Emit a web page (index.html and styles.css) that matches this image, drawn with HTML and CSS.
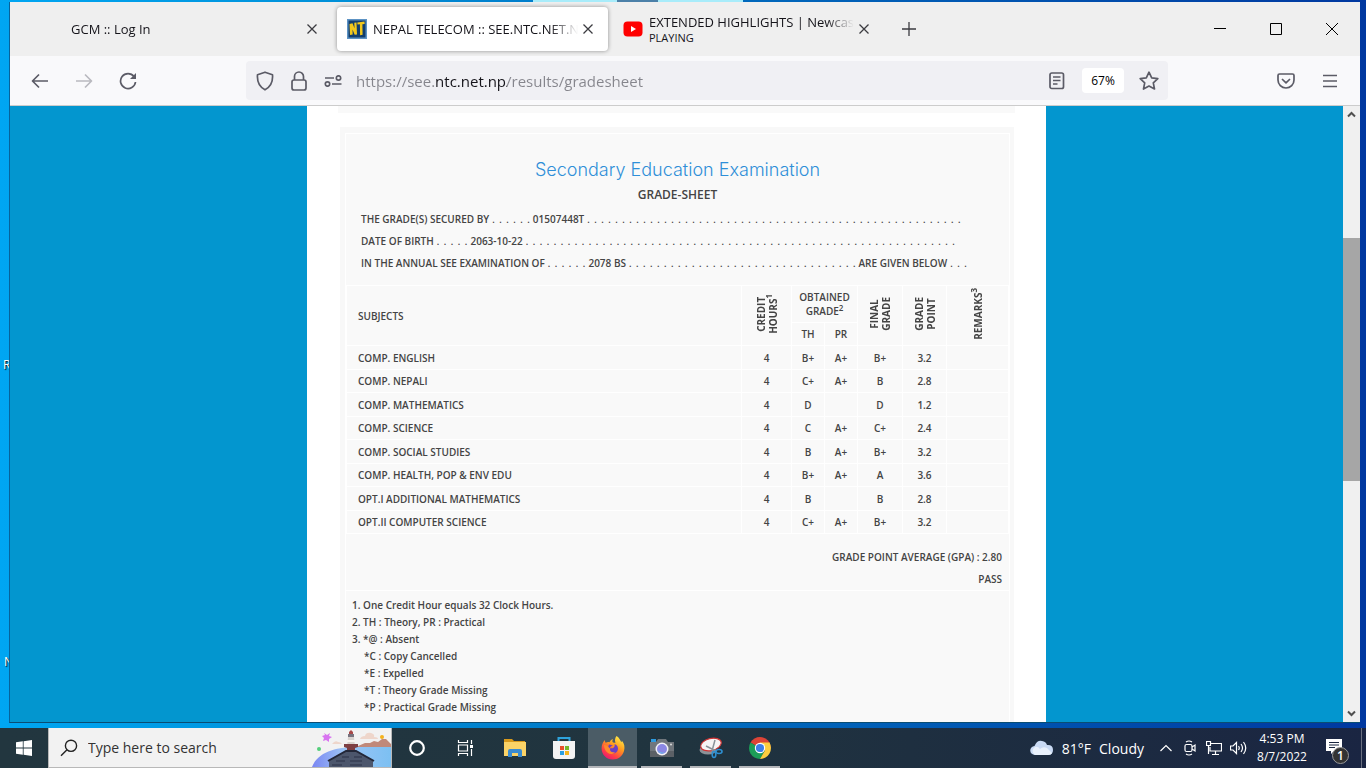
FILE: index.html
```html
<!DOCTYPE html>
<html lang="en">
<head>
	<meta charset="UTF-8">
	<title>NEPAL TELECOM :: SEE.NTC.NET.NP</title>
	<link rel="stylesheet" href="styles.css">
</head>
<body>
	<div class="desktop">
		<div class="peek"></div>
		<span class="shortcut recycle">R</span>
		<span class="shortcut nox">N</span>
		<div class="window">
			<div class="tabbar">
				<div class="tab">
					<button class="tab-title"><span class="fade">GCM :: Log In</span></button>
					<button class="close" aria-label="Close tab"><svg width="12" height="12" viewBox="0 0 12 12"><path d="M1.5 1.5l9 9M10.5 1.5l-9 9"/></svg></button>
				</div>
				<div class="tab active">
					<svg class="favicon" width="20" height="20" viewBox="0 0 20 20"><rect width="20" height="20" fill="#5d93c4"/><rect x="1.5" y="1.5" width="17" height="17" fill="#123e6e"/><path d="M3 16L2.500 5 5.500 4.200l2 5-.2-5.400 2.200-.4.500 12-2.300.4-2.200-5.300.2 5zM10.500 5.600l-.2-2.200 7.200-.8.200 2.300-2.300.3.2 10.600-2.500.4-.2-10.900z" fill="#f2c81c"/></svg>
					<button class="tab-title"><span class="fade">NEPAL TELECOM :: SEE.NTC.NET.N</span></button>
					<button class="close" aria-label="Close tab"><svg width="12" height="12" viewBox="0 0 12 12"><path d="M1.5 1.5l9 9M10.5 1.5l-9 9"/></svg></button>
				</div>
				<div class="tab">
					<svg class="favicon" width="20" height="16" viewBox="0 0 20 16"><rect x=".5" y=".5" width="19" height="15" rx="4" fill="#f00"/><path d="M8 5l5 3-5 3z" fill="#fff"/></svg>
					<button class="tab-title playing"><span class="fade">EXTENDED HIGHLIGHTS | Newcas</span><small>PLAYING</small></button>
					<button class="close" aria-label="Close tab"><svg width="12" height="12" viewBox="0 0 12 12"><path d="M1.5 1.5l9 9M10.5 1.5l-9 9"/></svg></button>
				</div>
				<button class="newtab" aria-label="New tab"><svg width="16" height="16" viewBox="0 0 16 16"><path d="M8 1v14M1 8h14"/></svg></button>
				<div class="controls">
					<button aria-label="Minimize"><svg width="12" height="12" viewBox="0 0 12 12"><path d="M0 5.5h12"/></svg></button>
					<button aria-label="Maximize"><svg width="12" height="12" viewBox="0 0 12 12"><path d="M.5.5h11v11H.5z"/></svg></button>
					<button aria-label="Close"><svg width="12" height="12" viewBox="0 0 12 12"><path d="M0 0l12 12M12 0L0 12"/></svg></button>
				</div>
			</div>
			<div class="toolbar">
				<button class="tool" aria-label="Back"><svg width="18" height="16" viewBox="0 0 18 16"><path d="M17 8H1.5M8 1.5L1.5 8 8 14.5"/></svg></button>
				<button class="tool" aria-label="Forward" disabled><svg width="18" height="16" viewBox="0 0 18 16"><path d="M1 8h15.5M10 1.5L16.5 8 10 14.5"/></svg></button>
				<button class="tool" aria-label="Reload"><svg width="18" height="18" viewBox="0 0 18 18"><path d="M15 4.500A7.500 7.500 0 1 0 16.500 10"/><path d="M17 1v6h-6z" fill="#5b5b66" stroke="none"/></svg></button>
				<div class="urlbar">
					<button class="icon" aria-label="Tracking protection"><svg width="18" height="20" viewBox="0 0 18 20"><path d="M9 1.200l7.500 2.600c.6 7.200-1.800 12-7.500 15C3.300 15.800.9 11 1.500 3.800z"/></svg></button>
					<button class="icon" aria-label="Connection"><svg width="16" height="20" viewBox="0 0 16 20"><rect x="1" y="9" width="14" height="10" rx="2"/><path d="M3.500 9V5.500a4.500 4.500 0 0 1 9 0V9"/></svg></button>
					<button class="icon" aria-label="Permissions"><svg width="18" height="12" viewBox="0 0 18 12"><circle cx="14.500" cy="3" r="2.200"/><circle cx="3.500" cy="9" r="2.200"/><path d="M1 3h9M8 9h9.500"/></svg></button>
					<input class="url" type="text" aria-label="Address" value="https://see.ntc.net.np/results/gradesheet">
					<button class="icon" aria-label="Reader view"><svg width="16" height="18" viewBox="0 0 16 18"><rect x="1" y="1" width="13.500" height="15.500" rx="1.800"/><path d="M4 5h7.500M4 8.500h7.500M4 12h4.500"/></svg></button>
					<button class="zoom">67%</button>
					<button class="icon" aria-label="Bookmark"><svg width="20" height="20" viewBox="0 0 20 20"><path d="M10 1.200l2.700 5.600 6.100.8-4.500 4.200 1.200 6.200L10 15.100l-5.500 2.900 1.200-6.200L1.200 7.600l6.100-.8z"/></svg></button>
				</div>
				<button class="tool" aria-label="Pocket"><svg width="18" height="16" viewBox="0 0 18 16"><path d="M2.500 1h13c.8 0 1.500.7 1.500 1.500V7c0 4.500-3.500 8-8 8s-8-3.500-8-8V2.500C1 1.700 1.700 1 2.500 1zM5 6l4 3.800L13 6"/></svg></button>
				<button class="tool" aria-label="Menu"><svg width="16" height="14" viewBox="0 0 16 14"><path d="M1 1.500h14M1 7h14M1 12.500h14"/></svg></button>
			</div>
			<div class="view">
				<div class="page">
					<div class="main">
						<div class="strip"></div>
						<div class="panel">
							<div class="sheet">
								<div class="head">
									<h1>Secondary Education Examination</h1>
									<h2>GRADE-SHEET</h2>
									<p>THE GRADE(S) SECURED BY <span class="dots">. . . . . .</span> 01507448T <span class="dots">. . . . . . . . . . . . . . . . . . . . . . . . . . . . . . . . . . . . . . . . . . . . . . . . . . . . . .</span></p>
									<p>DATE OF BIRTH <span class="dots">. . . . .</span> 2063-10-22 <span class="dots">. . . . . . . . . . . . . . . . . . . . . . . . . . . . . . . . . . . . . . . . . . . . . . . . . . . . . . . . . . . . . .</span></p>
									<p>IN THE ANNUAL SEE EXAMINATION OF <span class="dots">. . . . . .</span> 2078 BS <span class="dots">. . . . . . . . . . . . . . . . . . . . . . . . . . . . . . . . .</span> ARE GIVEN BELOW <span class="dots">. . .</span></p>
								</div>
								<table class="grades">
									<colgroup><col><col class="w-credit"><col class="w-th"><col class="w-th"><col class="w-final"><col class="w-point"><col class="w-remarks"></colgroup>
									<thead>
										<tr>
											<th rowspan="2" class="subject">SUBJECTS</th>
											<th rowspan="2"><div class="vert">CREDIT<br>HOURS<sup>1</sup></div></th>
											<th colspan="2">OBTAINED<br>GRADE<sup>2</sup></th>
											<th rowspan="2"><div class="vert">FINAL<br>GRADE</div></th>
											<th rowspan="2"><div class="vert">GRADE<br>POINT</div></th>
											<th rowspan="2"><div class="vert">REMARKS<sup>3</sup></div></th>
										</tr>
										<tr><th>TH</th><th>PR</th></tr>
									</thead>
									<tbody>
										<tr><td>COMP. ENGLISH</td><td>4</td><td>B+</td><td>A+</td><td>B+</td><td>3.2</td><td></td></tr>
										<tr><td>COMP. NEPALI</td><td>4</td><td>C+</td><td>A+</td><td>B</td><td>2.8</td><td></td></tr>
										<tr><td>COMP. MATHEMATICS</td><td>4</td><td>D</td><td></td><td>D</td><td>1.2</td><td></td></tr>
										<tr><td>COMP. SCIENCE</td><td>4</td><td>C</td><td>A+</td><td>C+</td><td>2.4</td><td></td></tr>
										<tr><td>COMP. SOCIAL STUDIES</td><td>4</td><td>B</td><td>A+</td><td>B+</td><td>3.2</td><td></td></tr>
										<tr><td>COMP. HEALTH, POP &amp; ENV EDU</td><td>4</td><td>B+</td><td>A+</td><td>A</td><td>3.6</td><td></td></tr>
										<tr><td>OPT.I ADDITIONAL MATHEMATICS</td><td>4</td><td>B</td><td></td><td>B</td><td>2.8</td><td></td></tr>
										<tr><td>OPT.II COMPUTER SCIENCE</td><td>4</td><td>C+</td><td>A+</td><td>B+</td><td>3.2</td><td></td></tr>
									</tbody>
								</table>
								<div class="gpa">
									<p>GRADE POINT AVERAGE (GPA) : 2.80</p>
									<p>PASS</p>
								</div>
								<div class="notes">
									<p>1. One Credit Hour equals 32 Clock Hours.</p>
									<p>2. TH : Theory, PR : Practical</p>
									<p>3. *@ : Absent</p>
									<p class="sub">*C : Copy Cancelled</p>
									<p class="sub">*E : Expelled</p>
									<p class="sub">*T : Theory Grade Missing</p>
									<p class="sub">*P : Practical Grade Missing</p>
								</div>
							</div>
						</div>
					</div>
				</div>
				<div class="scrollbar">
					<button aria-label="Scroll up"><svg width="9" height="7" viewBox="0 0 9 7"><path d="M1 5.500L4.500 2 8 5.500"/></svg></button>
					<div class="track"><div class="thumb"></div></div>
					<button aria-label="Scroll down"><svg width="9" height="7" viewBox="0 0 9 7"><path d="M1 1.500L4.500 5 8 1.500"/></svg></button>
				</div>
			</div>
		</div>
	</div>
	<div class="taskbar">
		<button class="start" aria-label="Start"><svg width="16" height="16" viewBox="0 0 16 16" fill="#fff"><path d="M0 2.300L6.800 1.300v6.300H0zM7.600 1.200L16 0v7.600H7.600zM0 8.400h6.800v6.300L0 13.700zM7.600 8.400H16V16l-8.400-1.200z"/></svg></button>
		<label class="search">
			<svg width="18" height="18" viewBox="0 0 18 18" fill="none" stroke="#222" stroke-width="1.400"><circle cx="11" cy="6.800" r="5.600"/><path d="M7 10.800L1 16.800"/></svg>
			<input type="text" placeholder="Type here to search" aria-label="Search">
			<svg class="lighthouse" width="79" height="38" viewBox="0 0 79 38">
				<defs><linearGradient id="sea"><stop offset="0" stop-color="#7a86f2"/><stop offset=".4" stop-color="#9cc4f6"/><stop offset="1" stop-color="#7cc0f2"/></linearGradient></defs>
				<path d="M46 17l7-3 5 0 4-2 4 1 4-3 4 0 5 5v4H46z" fill="#c0897a"/>
				<path d="M0 38C6 22 26 18 45 18l34 0v20z" fill="url(#sea)"/>
				<path d="M48 10q1-3 5-3 1-4 6-3 4 1 3 4 4 0 4 2zM20 15q3-4 6-2 3 0 4 2z" fill="#eed6cb"/>
				<path d="M36 8h6l1 10h-8z" fill="#d8d2ce"/><path d="M36 5h6v3h-6z" fill="#77737e"/><path d="M37 3l2-2 2 2v2h-4z" fill="#a84848"/><path d="M35 11h8v2h-8z" fill="#f7f4f0"/>
				<path d="M32 15h14v3l-3 1v4h-8v-4l-3-1z" fill="#7e3f43"/>
				<path d="M34 22h10l17 9v7H17v-7z" fill="#4c566c"/>
				<path d="M16 32l18-10h10l18 10" fill="none" stroke="#232738" stroke-width="2"/>
				<path d="M24 32h9m5 0h12M30 28h7m5 0h8M20 36h10m8 0h12" stroke="#2b3146"/>
				<path d="M12 4l3 2 3-2-1 3 3 1-3 2 0 3-3-2-3 1 1-3-2-2 3-1z" fill="#d873f0"/>
				<circle cx="7" cy="20" r="2" fill="#54cf7b"/><circle cx="70" cy="8" r="2" fill="#f5b21c"/>
			</svg>
		</label>
		<button class="app" aria-label="Cortana"><svg width="18" height="18" viewBox="0 0 18 18"><circle cx="9" cy="9" r="6.800" fill="none" stroke="#fff" stroke-width="2.200"/></svg></button>
		<button class="app" aria-label="Task view"><svg width="18" height="16" viewBox="0 0 18 16" fill="none" stroke="#fff" stroke-width="1.200"><path d="M1.500 0v2.500h9V0M1.500 16v-2.500h9V16M1.500 5h9v6h-9zM14.500 0v4M14.500 9v7"/><path d="M13 5h3v3h-3z" fill="#fff" stroke="none"/></svg></button>
		<button class="app" aria-label="File Explorer"><svg width="22" height="20" viewBox="0 0 22 20"><path d="M0 1h8l2 2h11v3H0z" fill="#d99a1c"/><path d="M0 4h22v14H0z" fill="#fbd367"/><path d="M4 19v-6q0-2 2-2h10q2 0 2 2v6h-4v-4H8v4z" fill="#3a8bd0"/></svg></button>
		<button class="app" aria-label="Store"><svg width="24" height="24" viewBox="0 0 24 24"><path d="M6.500 6V2h11v4" fill="none" stroke="#2ea3dc" stroke-width="2"/><path d="M1 5h22v15q0 3-3 3H4q-3 0-3-3z" fill="#f3f3f3"/><path d="M8 10h4v4H8z" fill="#e8502c"/><path d="M13 10h4v4h-4z" fill="#76b82c"/><path d="M8 15h4v4H8z" fill="#2b9fe0"/><path d="M13 15h4v4h-4z" fill="#f6b51c"/></svg></button>
		<button class="app open current" aria-label="Firefox"><svg width="24" height="24" viewBox="0 0 24 24">
			<defs><linearGradient id="fox" x1=".8" y1="0" x2=".2" y2="1"><stop offset="0" stop-color="#fff04a"/><stop offset=".4" stop-color="#ff9a1e"/><stop offset=".75" stop-color="#ff3d47"/><stop offset="1" stop-color="#e3127c"/></linearGradient></defs>
			<path d="M15.500 0c3.300 2 3.600 4.500 5 6.200 0 0 .4-.8.300-1.700C23.500 8 24 11 23 15c-1.400 5-6 8.500-11.200 8.500C5.500 23.500.6 18.700.6 12.500c0-3.500 1.200-6.500 3.200-8.500 0 1 .3 2 .9 2.700C6 6 7.600 6 8.500 6.300 9.500 4 10.500 3.500 12 3c-.6 1-.7 2-.5 3 1.500 1 2.500 1 3 .7C13.500 4.500 14 2 15.500 0z" fill="url(#fox)"/>
			<path d="M8 8.500c2 .2 2.600 1 4 1-2 .5-3.300 1.800-3 3 1.500-.5 2.500 0 3.500-.8 1.500-1.200 1.300-2.700 1-3.700 3 1 4 3.500 3.300 6-.8 2.600-3 3.500-5 3.300C8 17 6.300 14 7 11.500z" fill="#6b3fc4"/>
			<path d="M3 9c2 0 4 1 6 3.500-.5 3 2 4.500 5 3.500-2 2.500-5 2.500-7 1S3 13 3 9z" fill="#ff8a2c"/>
		</svg></button>
		<button class="app open" aria-label="Camera"><svg width="24" height="20" viewBox="0 0 24 20"><path d="M1 1h5v3H1z" fill="#2d9be0"/><path d="M8 1h8l2 3h6v15H0V4h6z" fill="#70767c"/><path d="M0 13h24v6H0z" fill="#5b6066"/><circle cx="12" cy="11" r="6.500" fill="#f1f1f6"/><circle cx="12" cy="11" r="5" fill="#8b87e4"/><path d="M8 12a4 4 0 0 0 7 2 5 5 0 0 1-7-2z" fill="#5cc9ee"/><circle cx="21" cy="6.500" r="1" fill="#ddd"/></svg></button>
		<button class="app open" aria-label="Snipping Tool"><svg width="24" height="22" viewBox="0 0 24 22"><ellipse cx="9" cy="13" rx="8.500" ry="4.500" fill="#8c9298"/><ellipse cx="12" cy="7.500" rx="10.500" ry="6" transform="rotate(-14 12 7.500)" fill="#f6f4f4" stroke="#cf3434" stroke-width="1.200"/><path d="M16 3l-3 11M7 9l10 5" stroke="#8a9298" stroke-width="1.500"/><g fill="none" stroke="#2e8fd2" stroke-width="1.600"><ellipse cx="15" cy="17.500" rx="1.800" ry="3"/><ellipse cx="20" cy="14.500" rx="3" ry="2"/></g></svg></button>
		<button class="app open" aria-label="Chrome"><svg width="22" height="22" viewBox="0 0 22 22"><path d="M11 11L1.500 5.500a11 11 0 0 1 19 0L22 11z" fill="#dd4437"/><path d="M11 11L1.500 5.500A11 11 0 0 0 11 22l4.800-8.200z" fill="#1c9d58"/><path d="M11 22a11 11 0 0 0 9.500-16.500H11l4.800 8.200z" fill="#fdcd3f"/><circle cx="11" cy="11" r="5.200" fill="#fff"/><circle cx="11" cy="11" r="4.100" fill="#3e7de8"/></svg></button>
		<div class="tray">
			<button class="weather"><svg width="24" height="16" viewBox="0 0 24 16"><path d="M5 15a4.500 4.500 0 0 1-.5-9Q7 0 12 1q4 .5 5 4 6-.5 6 5 0 5-5 5z" fill="#c9daf4"/><path d="M5 15a4.500 4.500 0 0 1 0-8q3-1 5 2 3-3 7-1l5 5q-1 2-4 2z" fill="#e9f1fc"/></svg><span>81°F</span><span>Cloudy</span></button>
			<button class="mini" aria-label="Hidden icons"><svg width="12" height="8" viewBox="0 0 12 8"><path d="M.5 7L6 1.500 11.500 7"/></svg></button>
			<button class="mini" aria-label="Meet now"><svg width="12" height="16" viewBox="0 0 12 16"><rect x="1" y="4.500" width="7" height="7" rx="1.500"/><path d="M8 7l3-2v6L8 9M2 2q3-2 6 0M2 14q3 2 6 0"/></svg></button>
			<button class="mini" aria-label="Network"><svg width="16" height="14" viewBox="0 0 16 14"><path d="M5 2.500h10.500v7.500H4V6M9.500 10v3M6 13.500h7M.5.500h4v4h-4zM2.500 4.500V13"/></svg></button>
			<button class="mini" aria-label="Volume"><svg width="17" height="14" viewBox="0 0 17 14"><path d="M.5 5H3l3.500-3.500v11L3 9H.5zM8.500 5q1.500 2 0 4M11 3q3 4 0 8M13.500 1q4.500 6 0 12"/></svg></button>
			<button class="clock">4:53 PM<br>8/7/2022</button>
			<button class="notify" aria-label="Notifications"><svg width="26" height="26" viewBox="0 0 26 26"><path d="M1 4h16v12H9l-3 3v-3H1z" fill="#fff"/><path d="M4 7.500h10M4 10h10M4 12.500h6" stroke="#1a2640" stroke-width="1.200"/></svg><b>1</b></button>
		</div>
	</div>
</body>
</html>
```
FILE: styles.css
```css
*{margin:0;padding:0;box-sizing: border-box;}
body{height: 100vh;display: flex;flex-direction: column;overflow: hidden;font-family: "Open Sans","Noto Sans",sans-serif;}
button{border:0;background: none;font-family: inherit;color: inherit;}
input{border:0;outline: none;font-family: inherit;background: none;}
svg{display: block;flex: none;}

/* desktop and window */
.desktop{flex: 1;min-height: 0;display: flex;position: relative;padding: 2px 6px 5px 9px;background: linear-gradient(90deg,#00a6f2 0,#0090d8 25%,#0068bc 55%,#0038a0 100%);}
.peek{position: absolute;top: 0;left: 533px;width: 210px;height: 2px;background: linear-gradient(90deg,#a8ecfa 84px,#4c80a8 84px,#4c80a8 125px,#a8ecfa 125px);}
.shortcut{position: absolute;font-size: 12px;line-height: 16px;color: #fff;text-shadow: 1px 1px 1px #000;}
.recycle{left: 3px;top: 357px;}
.nox{left: 4px;top: 654px;}
.window{position: relative;flex: 1;min-width: 0;display: flex;flex-direction: column;border-left: 1px solid #06639b;border-bottom: 1px solid #0a4d74;background: #f9f9fb;}

/* tabs */
.tabbar{height: 54px;display: flex;align-items: center;padding-left: 51px;background: #efefef;color: #15141a;}
.tab{flex: 0 1 271px;min-width: 0;height: 44px;margin-right: 5px;padding: 0 10px;display: flex;align-items: center;border-radius: 4px;}
.active{background: #fff;box-shadow: 0 0 4px rgba(0,0,0,.4);}
.favicon{margin-right: 6px;}
.tab-title{flex: 1;min-width: 0;text-align: left;font-size: 13px;line-height: 20px;}
.fade{display: block;overflow: hidden;white-space: nowrap;-webkit-mask-image: linear-gradient(270deg,transparent,#000 28px);mask-image: linear-gradient(270deg,transparent,#000 28px);}
.playing{line-height: 17px;}
.playing small{display: block;font-size: 11px;line-height: 14px;}
.close{width: 20px;height: 24px;display: grid;place-items: center;}
.close svg,.newtab svg{fill: none;stroke: #3b3b40;stroke-width: 1.3;}
.newtab{width: 40px;height: 40px;display: grid;place-items: center;}
.controls{margin-left: auto;align-self: stretch;display: flex;}
.controls button{width: 56px;display: grid;place-items: center;}
.controls svg{fill: none;stroke: #000;}

/* toolbar */
.toolbar{height: 50px;display: flex;align-items: center;padding: 0 8px;border-bottom: 1px solid #ccc;}
.tool{width: 44px;height: 40px;display: grid;place-items: center;}
.tool svg,.icon svg{fill: none;stroke: #5b5b66;stroke-width: 1.7;stroke-linejoin: round;}
.tool:disabled{opacity: .4;}
.urlbar{flex: 1;min-width: 0;height: 39px;margin: 0 96px;padding: 0 2px;display: flex;align-items: center;background: #f0f0f4;border-radius: 4px;}
.icon{width: 34px;height: 36px;display: grid;place-items: center;}
.url{flex: 1;min-width: 0;height: 36px;padding-left: 6px;font-size: 15px;color: transparent;background: linear-gradient(90deg,#85858c 85px,#15141a 85px,#15141a 157px,#85858c 157px);-webkit-background-clip: text;background-clip: text;}
.zoom{width: 42px;height: 25px;margin: 0 8px;background: #fff;border-radius: 4px;font-size: 12px;}

/* page */
.view{flex: 1;min-height: 0;display: flex;}
.page{flex: 1;min-width: 0;display: flex;justify-content: center;overflow: hidden;background: #0396cf;}
.main{width: 739px;max-width: 100%;padding: 0 31px;display: flex;flex-direction: column;background: #fff;}
.strip{height: 7px;flex: none;background: #f9f9f9;}
.panel{flex: 1;margin: 14px 1px 0 2px;padding: 6px 4px 0 5px;background: #f8f8f8;}
.sheet{border: 1px solid #fff;border-bottom: 0;background: #f9f9f9;font-size: 10px;font-weight: 600;color: #444;}
.head{padding: 24px 15px 11px;}
.head h1{font-family: Inter,sans-serif;font-size: 18px;font-weight: 300;line-height: 24px;text-align: center;color: #2f8fd8;}
.head h2{font-size: 12px;font-weight: 600;line-height: 26px;text-align: center;}
.head p{line-height: 22px;white-space: nowrap;}
.dots{font-family: "DejaVu Sans",sans-serif;font-size: 11px;font-weight: 400;line-height: 11px;}
.grades{width: 100%;table-layout: fixed;border-collapse: collapse;}
.grades th,.grades td{border: 1px solid #fff;text-align: center;vertical-align: middle;font-weight: 600;line-height: 14px;}
.grades thead tr:first-child{height: 37px;}
.grades thead tr:last-child{height: 23px;}
.grades tbody tr{height: 24px;}
.grades tbody tr:nth-child(even){height: 23px;}
.grades .subject,.grades td:first-child{text-align: left;padding-left: 11px;}
.w-credit{width: 50px;}
.w-th{width: 33px;}
.w-final{width: 45px;}
.w-point{width: 44px;}
.w-remarks{width: 62px;}
.vert{display: inline-block;writing-mode: vertical-rl;transform: rotate(180deg);font-weight: 700;line-height: 12px;white-space: nowrap;}
.grades sup{font-size: 8px;line-height: 0;}
.gpa{padding: 12px 7px 0;height: 57px;border-bottom: 1px solid #fff;text-align: right;line-height: 22px;}
.notes{padding: 6px;line-height: 17px;}
.sub{padding-left: 12px;}

.scrollbar{width: 17px;display: flex;flex-direction: column;background: #f0f0f0;}
.scrollbar button{height: 17px;display: grid;place-items: center;}
.scrollbar svg{fill: none;stroke: #505050;stroke-width: 2;}
.track{flex: 1;padding-top: 115px;}
.thumb{height: 243px;background: #a6a6a6;}

/* taskbar */
.taskbar{height: 40px;flex: none;display: flex;background: linear-gradient(90deg,#22363f 0,#20343f 50%,#1a2542 100%);color: #fff;}
.start{width: 48px;display: grid;place-items: center;}
.search{width: 344px;display: flex;align-items: center;padding-left: 11px;background: #f2f2f2;border: 1px solid #b8b8b8;border-top: 0;}
.search input{flex: 1;min-width: 0;padding-left: 10px;font-size: 14px;}
.search input::placeholder{color: #333;}
.lighthouse{align-self: flex-end;}
.app{width: 49px;display: grid;place-items: center;position: relative;}
.open::after{content: "";position: absolute;left: 4px;right: 4px;bottom: 0;height: 2px;background: #b4b6ba;}
.current{background: #4b5c66;}
.current::after{left: 0;right: 0;}
.tray{margin-left: auto;display: flex;align-items: center;padding-right: 4px;}
.weather{display: flex;align-items: center;gap: 8px;margin-right: 10px;font-size: 14px;}
.mini{width: 24px;height: 40px;display: grid;place-items: center;}
.mini svg{fill: none;stroke: #fff;stroke-width: 1.2;}
.clock{width: 64px;font-size: 12px;line-height: 18px;}
.notify{width: 48px;height: 40px;display: grid;place-items: center;position: relative;border-right: 1px solid #6a7080;}
.notify b{position: absolute;right: 12px;bottom: 4px;width: 17px;height: 17px;border: 1px solid #999;border-radius: 50%;background: #333;color: #fff;font-size: 12px;font-weight: 600;line-height: 15px;}
```
